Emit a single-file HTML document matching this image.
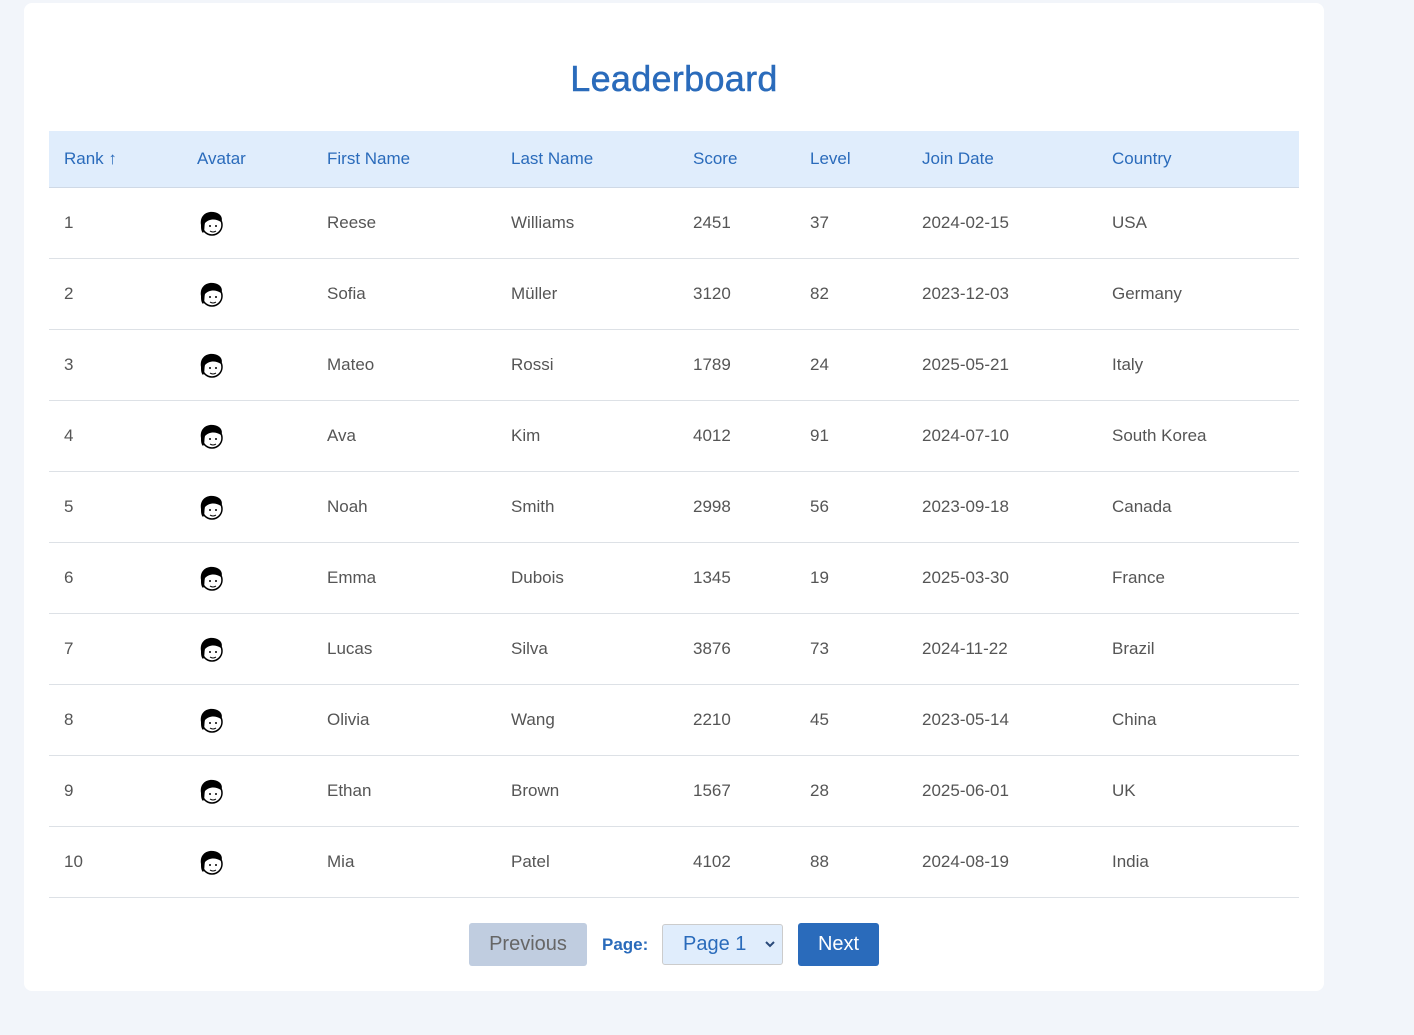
<!DOCTYPE html>
<html><head><style>
body{margin:0;background:#f2f5fa;font-family:"Liberation Sans",sans-serif;width:1414px;height:1035px;overflow:hidden;position:relative}
.card{position:absolute;left:24px;top:3px;width:1300px;height:988px;background:#fff;border-radius:8px}
h1{position:absolute;top:55px;left:0;width:1300px;margin:0;text-align:center;color:#2a6bbb;font-size:36px;font-weight:normal;letter-spacing:0.3px;-webkit-text-stroke:0.5px #2a6bbb}
table{position:absolute;left:25px;top:128px;width:1250px;border-collapse:collapse}
th{background:#e0edfc;color:#2a6bbb;font-weight:normal;font-size:17px;text-align:left;height:56px;padding:0 0 0 15px;border-bottom:1px solid #cfd9e6}
td{height:70px;border-bottom:1px solid #dde1e6;color:#555;font-size:17px;padding:0 0 0 15px}
.pg{position:absolute;top:920px;left:0;width:1300px;height:43px}
.b{position:absolute;top:0;height:43px;border-radius:3px;font-size:20px;line-height:43px;text-align:center}
</style></head><body>
<div class="card">
<h1>Leaderboard</h1>
<table>
<tr><th style="width:118px">Rank ↑</th><th style="width:115px">Avatar</th><th style="width:169px">First Name</th><th style="width:167px">Last Name</th><th style="width:102px">Score</th><th style="width:97px">Level</th><th style="width:175px">Join Date</th><th>Country</th></tr>
<tr><td>1</td><td>AV</td><td>Reese</td><td>Williams</td><td>2451</td><td>37</td><td>2024-02-15</td><td>USA</td></tr>
<tr><td>2</td><td>AV</td><td>Sofia</td><td>Müller</td><td>3120</td><td>82</td><td>2023-12-03</td><td>Germany</td></tr>
<tr><td>3</td><td>AV</td><td>Mateo</td><td>Rossi</td><td>1789</td><td>24</td><td>2025-05-21</td><td>Italy</td></tr>
<tr><td>4</td><td>AV</td><td>Ava</td><td>Kim</td><td>4012</td><td>91</td><td>2024-07-10</td><td>South Korea</td></tr>
<tr><td>5</td><td>AV</td><td>Noah</td><td>Smith</td><td>2998</td><td>56</td><td>2023-09-18</td><td>Canada</td></tr>
<tr><td>6</td><td>AV</td><td>Emma</td><td>Dubois</td><td>1345</td><td>19</td><td>2025-03-30</td><td>France</td></tr>
<tr><td>7</td><td>AV</td><td>Lucas</td><td>Silva</td><td>3876</td><td>73</td><td>2024-11-22</td><td>Brazil</td></tr>
<tr><td>8</td><td>AV</td><td>Olivia</td><td>Wang</td><td>2210</td><td>45</td><td>2023-05-14</td><td>China</td></tr>
<tr><td>9</td><td>AV</td><td>Ethan</td><td>Brown</td><td>1567</td><td>28</td><td>2025-06-01</td><td>UK</td></tr>
<tr><td>10</td><td>AV</td><td>Mia</td><td>Patel</td><td>4102</td><td>88</td><td>2024-08-19</td><td>India</td></tr>
</table>
<div class="pg">
<div class="b" style="left:445px;width:118px;background:#c0cde0;color:#666">Previous</div>
<div style="position:absolute;left:578px;top:12px;color:#2a6bbb;font-size:17px;font-weight:bold">Page:</div>
<div class="b" style="left:638px;width:119px;height:39px;line-height:39px;top:1px;background:#e0edfc;border:1px solid #ccc;color:#2a6bbb;text-align:left;text-indent:20px">Page 1<svg style="position:absolute;right:7px;top:16px" width="10" height="7" viewBox="0 0 10 7"><path d="M1 1 L5 5 L9 1" fill="none" stroke="#2a4a7a" stroke-width="2"/></svg></div>
<div class="b" style="left:774px;width:81px;background:#2a6bbb;color:#fff">Next</div>
</div>
</div>
<script>
document.querySelectorAll('td').forEach(function(t){if(t.textContent==='AV'){t.innerHTML='<svg width="32" height="32" viewBox="0 0 32 32"><circle cx="17" cy="18" r="10" fill="#fff" stroke="#000" stroke-width="1.5"/><path d="M6 18 C4 6 16 2 24 7 C28 10 27 14 26 15 C20 11 14 12 10 16 C9 20 10 24 8 26 C6 24 6 21 6 18Z" fill="#000"/><circle cx="15" cy="19" r="1" fill="#000"/><circle cx="21" cy="19" r="1" fill="#000"/><path d="M15 24 Q18 26 21 24" fill="none" stroke="#000"/></svg>';t.style.paddingLeft='13px';t.style.lineHeight='0'}});
</script>
</body></html>
